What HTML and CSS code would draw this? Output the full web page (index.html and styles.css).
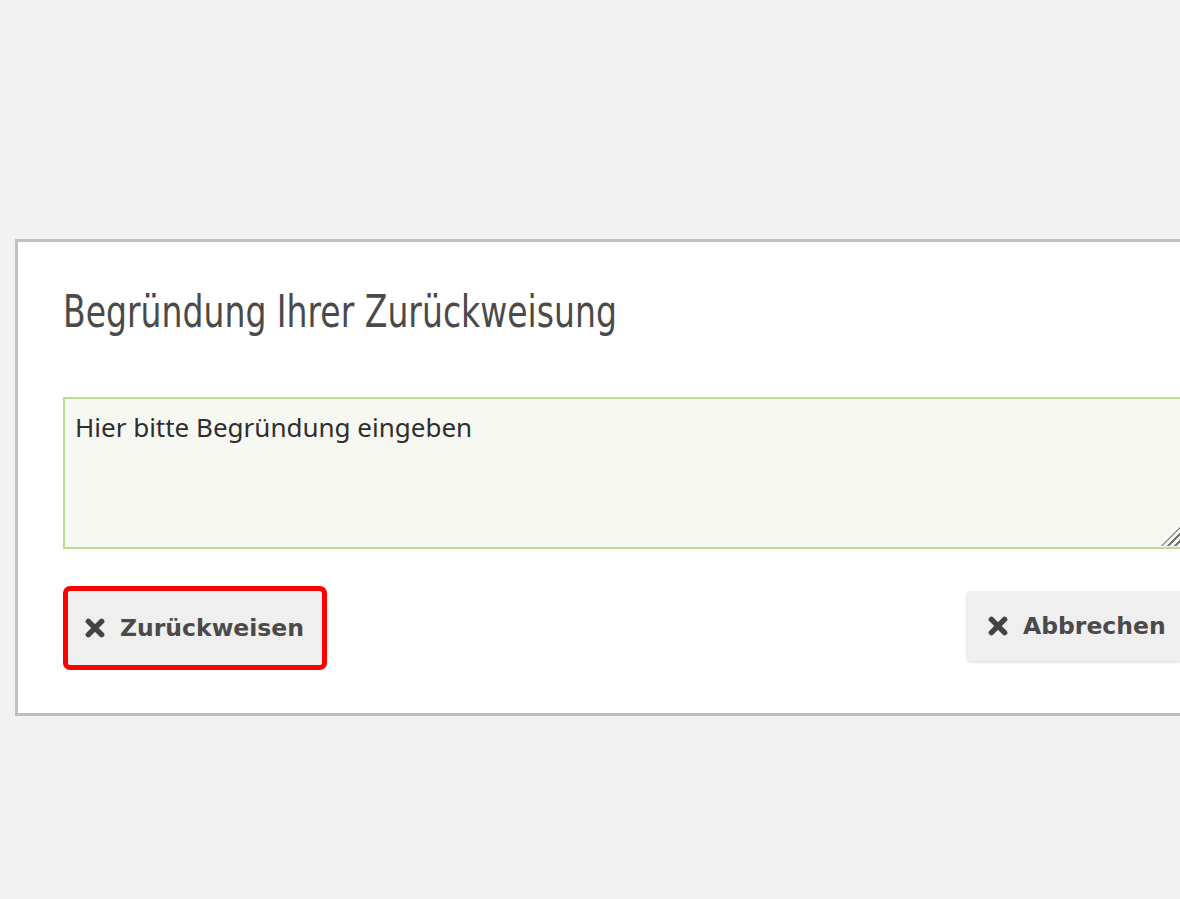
FILE: index.html
```html
<!DOCTYPE html>
<html lang="de">
<head>
<meta charset="utf-8">
<title>Begründung</title>
<link rel="stylesheet" href="styles.css">
</head>
<body>
<div class="page">
  <div class="dialog">
    <h2 class="title"><span class="title-text">Begründung Ihrer Zurückweisung</span></h2>
    <div class="field">
      <textarea class="reason" id="reason" autofocus>Hier bitte Begründung eingeben</textarea>
      <span class="grip"></span>
    </div>
    <div class="actions">
      <button class="btn btn-marked" type="button"><svg class="icon" viewBox="0 0 20 20" aria-hidden="true"><path d="M4 4 L16 16 M16 4 L4 16" stroke="#444" stroke-width="5" stroke-linecap="round"/></svg>Zurückweisen</button>
      <button class="btn btn-cancel" type="button"><svg class="icon" viewBox="0 0 20 20" aria-hidden="true"><path d="M4 4 L16 16 M16 4 L4 16" stroke="#444" stroke-width="5" stroke-linecap="round"/></svg>Abbrechen</button>
    </div>
  </div>
</div>
<script src="script.js"></script>
</body>
</html>
```

FILE: styles.css
```css
html, body {
  margin: 0;
  padding: 0;
  background: #f2f2f2;
  overflow: hidden;
}
.page {
  width: 1180px;
  height: 899px;
  overflow: hidden;
  padding-top: 239px;
  box-sizing: border-box;
}
.dialog {
  margin-left: 15px;
  width: 1217px;
  box-sizing: border-box;
  background: #fff;
  border: 3px solid #c0c0c0;
  padding: 40px 45px 48px 45px;
  display: flex;
  flex-direction: column;
}
.title {
  margin: 0;
  font-family: "DejaVu Sans", sans-serif;
  font-stretch: condensed;
  font-weight: normal;
  font-size: 44px;
  line-height: 60px;
  color: #4a4a4a;
}
.title-text {
  display: inline-block;
  transform: scaleX(0.835);
  transform-origin: left center;
  white-space: nowrap;
}
.field {
  margin-top: 55px;
  position: relative;
}
.reason {
  display: block;
  width: 100%;
  height: 152px;
  box-sizing: border-box;
  border: 2px solid #bcdc94;
  background: #f8f8f2;
  padding: 10px 10px;
  font-family: "Noto Sans", sans-serif;
  font-size: 26px;
  line-height: 36px;
  color: #2e2e2e;
  caret-color: #222;
  resize: none;
  outline: none;
}
.grip {
  position: absolute;
  right: 3px;
  bottom: 3px;
  width: 20px;
  height: 20px;
  background: repeating-linear-gradient(135deg, transparent 0 3px, #777 3px 5px);
  clip-path: polygon(100% 0, 100% 100%, 0 100%);
}
.actions {
  margin-top: 42px;
  display: flex;
  justify-content: space-between;
  align-items: flex-start;
}
.btn {
  height: 70px;
  border: none;
  border-radius: 5px;
  background: #efefef;
  box-shadow: 0 2px 2px rgba(0,0,0,0.10);
  font-family: "DejaVu Sans", sans-serif;
  font-weight: bold;
  font-size: 23.5px;
  color: #4a4a4a;
  display: flex;
  align-items: center;
  gap: 14px;
  cursor: pointer;
}
.btn-marked {
  margin-left: 5px;
  height: 74px;
  width: 254px;
  padding: 0 0 0 16px;
  outline: 5px solid #ff0000;
  border-radius: 2px;
  box-shadow: none;
}
.btn-cancel {
  width: 218px;
  padding: 0 0 0 21px;
}
.icon {
  width: 22px;
  height: 22px;
  flex: none;
}
```

FILE: script.js
```js
var field = document.getElementById('reason');
field.focus();
field.setSelectionRange(field.value.length, field.value.length);
```
